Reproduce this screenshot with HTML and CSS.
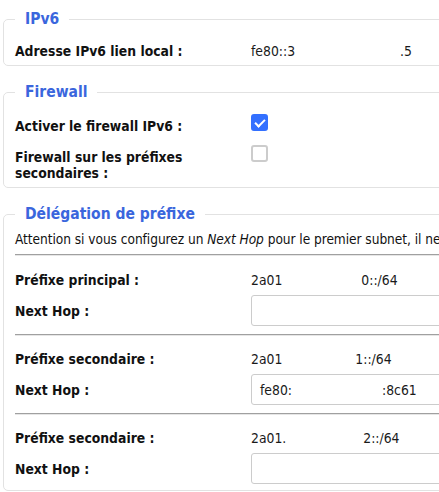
FILE: index.html
```html
<!DOCTYPE html>
<html lang="fr">
<head>
<meta charset="utf-8">
<title>IPv6</title>
<link rel="stylesheet" href="styles.css">
</head>
<body>
<fieldset class="box box-ipv6">
  <legend>IPv6</legend>
  <div class="row row-text">
    <span class="label">Adresse IPv6 lien local :</span>
    <span class="value">fe80::3<span class="gap gap-ll"></span>.5</span>
  </div>
</fieldset>

<fieldset class="box box-fw">
  <legend>Firewall</legend>
  <div class="row row-check">
    <label class="label" for="fw1">Activer le firewall IPv6 :</label>
    <input class="check" type="checkbox" id="fw1" checked>
  </div>
  <div class="row row-check">
    <label class="label" for="fw2">Firewall sur les préfixes secondaires :</label>
    <input class="check" type="checkbox" id="fw2">
  </div>
</fieldset>

<fieldset class="box box-pd">
  <legend>Délégation de préfixe</legend>
  <p class="note">Attention si vous configurez un <em>Next Hop</em> pour le premier subnet, il ne</p>
  <hr class="sep sep-first">
  <div class="row row-pd">
    <span class="label">Préfixe principal :</span>
    <span class="value">2a01<span class="gap gap-p0"></span>0::/64</span>
  </div>
  <div class="row row-pd">
    <label class="label" for="nh0">Next Hop :</label>
    <input class="field" type="text" id="nh0">
  </div>
  <hr class="sep">
  <div class="row row-pd">
    <span class="label">Préfixe secondaire :</span>
    <span class="value">2a01<span class="gap gap-p1"></span>1::/64</span>
  </div>
  <div class="row row-pd">
    <label class="label" for="nh1">Next Hop :</label>
    <div class="field field-value" id="nh1">fe80:<span class="gap gap-nh"></span>:8c61</div>
  </div>
  <hr class="sep">
  <div class="row row-pd">
    <span class="label">Préfixe secondaire :</span>
    <span class="value">2a01.<span class="gap gap-p2"></span>2::/64</span>
  </div>
  <div class="row row-pd">
    <label class="label" for="nh2">Next Hop :</label>
    <input class="field" type="text" id="nh2">
  </div>
</fieldset>
</body>
</html>
```

FILE: styles.css
```css
html, body {
  margin: 0;
  padding: 0;
  background: #fff;
  overflow: hidden;
}

body {
  padding: 10px 0 0 3px;
  font-family: "DejaVu Sans", sans-serif;
  font-stretch: condensed;
  font-size: 13.8px;
  line-height: 16px;
  color: #111;
  width: 560px;
}

.box {
  margin: 0 0 17px 0;
  padding: 0 10px 6px 11px;
  border: 1px solid #e2e2e2;
  border-radius: 5px;
  min-width: 0;
}

.box legend {
  padding: 0 10px;
  font-weight: bold;
  font-size: 15.5px;
  line-height: 18px;
  color: #3a66dd;
}

.box-ipv6 { padding-top: 15px; }
.box-fw { padding-top: 13px; }
.box-pd { padding-top: 8px; }

.row {
  display: grid;
  grid-template-columns: 236px 1fr;
  align-items: center;
}

.label {
  font-weight: bold;
  color: #111;
}

.value {
  color: #1a1a1a;
  white-space: nowrap;
}

.gap { display: inline-block; }
.gap-ll { width: 105px; }
.gap-p0 { width: 79px; }
.gap-p1 { width: 73px; }
.gap-p2 { width: 77px; }
.gap-nh { width: 90px; }

.row-check {
  align-items: start;
}
.row-check + .row-check { margin-top: 11px; }
.row-check .label {
  padding-top: 4px;
  width: 200px;
}

.check {
  appearance: none;
  -webkit-appearance: none;
  margin: 0;
  width: 17px;
  height: 17px;
  border: 2px solid #cccccc;
  border-radius: 3px;
  background: #fff;
  position: relative;
}
.check:checked {
  border-color: #3370ff;
  background: #3370ff;
}
.check:checked::after {
  content: "";
  position: absolute;
  left: 4px;
  top: 1px;
  width: 4px;
  height: 8px;
  border: solid #fff;
  border-width: 0 2px 2px 0;
  transform: rotate(45deg);
}

.note {
  margin: 0;
  white-space: nowrap;
  font-size: 13.6px;
  letter-spacing: -0.05px;
  color: #111;
}

.sep {
  margin: 8px 0;
  border: 0;
  border-top: 1px solid #a0a0a0;
  border-bottom: 1px solid #e6e6e6;
  height: 0;
}
.sep-first { margin: 7px 0 9px; }

.row-pd { min-height: 30px; }

.field {
  box-sizing: border-box;
  margin: 0;
  width: 260px;
  height: 31px;
  border: 1px solid #cccccc;
  border-radius: 3px;
  background: #fff;
  padding: 0 8px;
  font: inherit;
  color: #1a1a1a;
}

.field-value {
  display: flex;
  align-items: center;
  white-space: nowrap;
}
```
